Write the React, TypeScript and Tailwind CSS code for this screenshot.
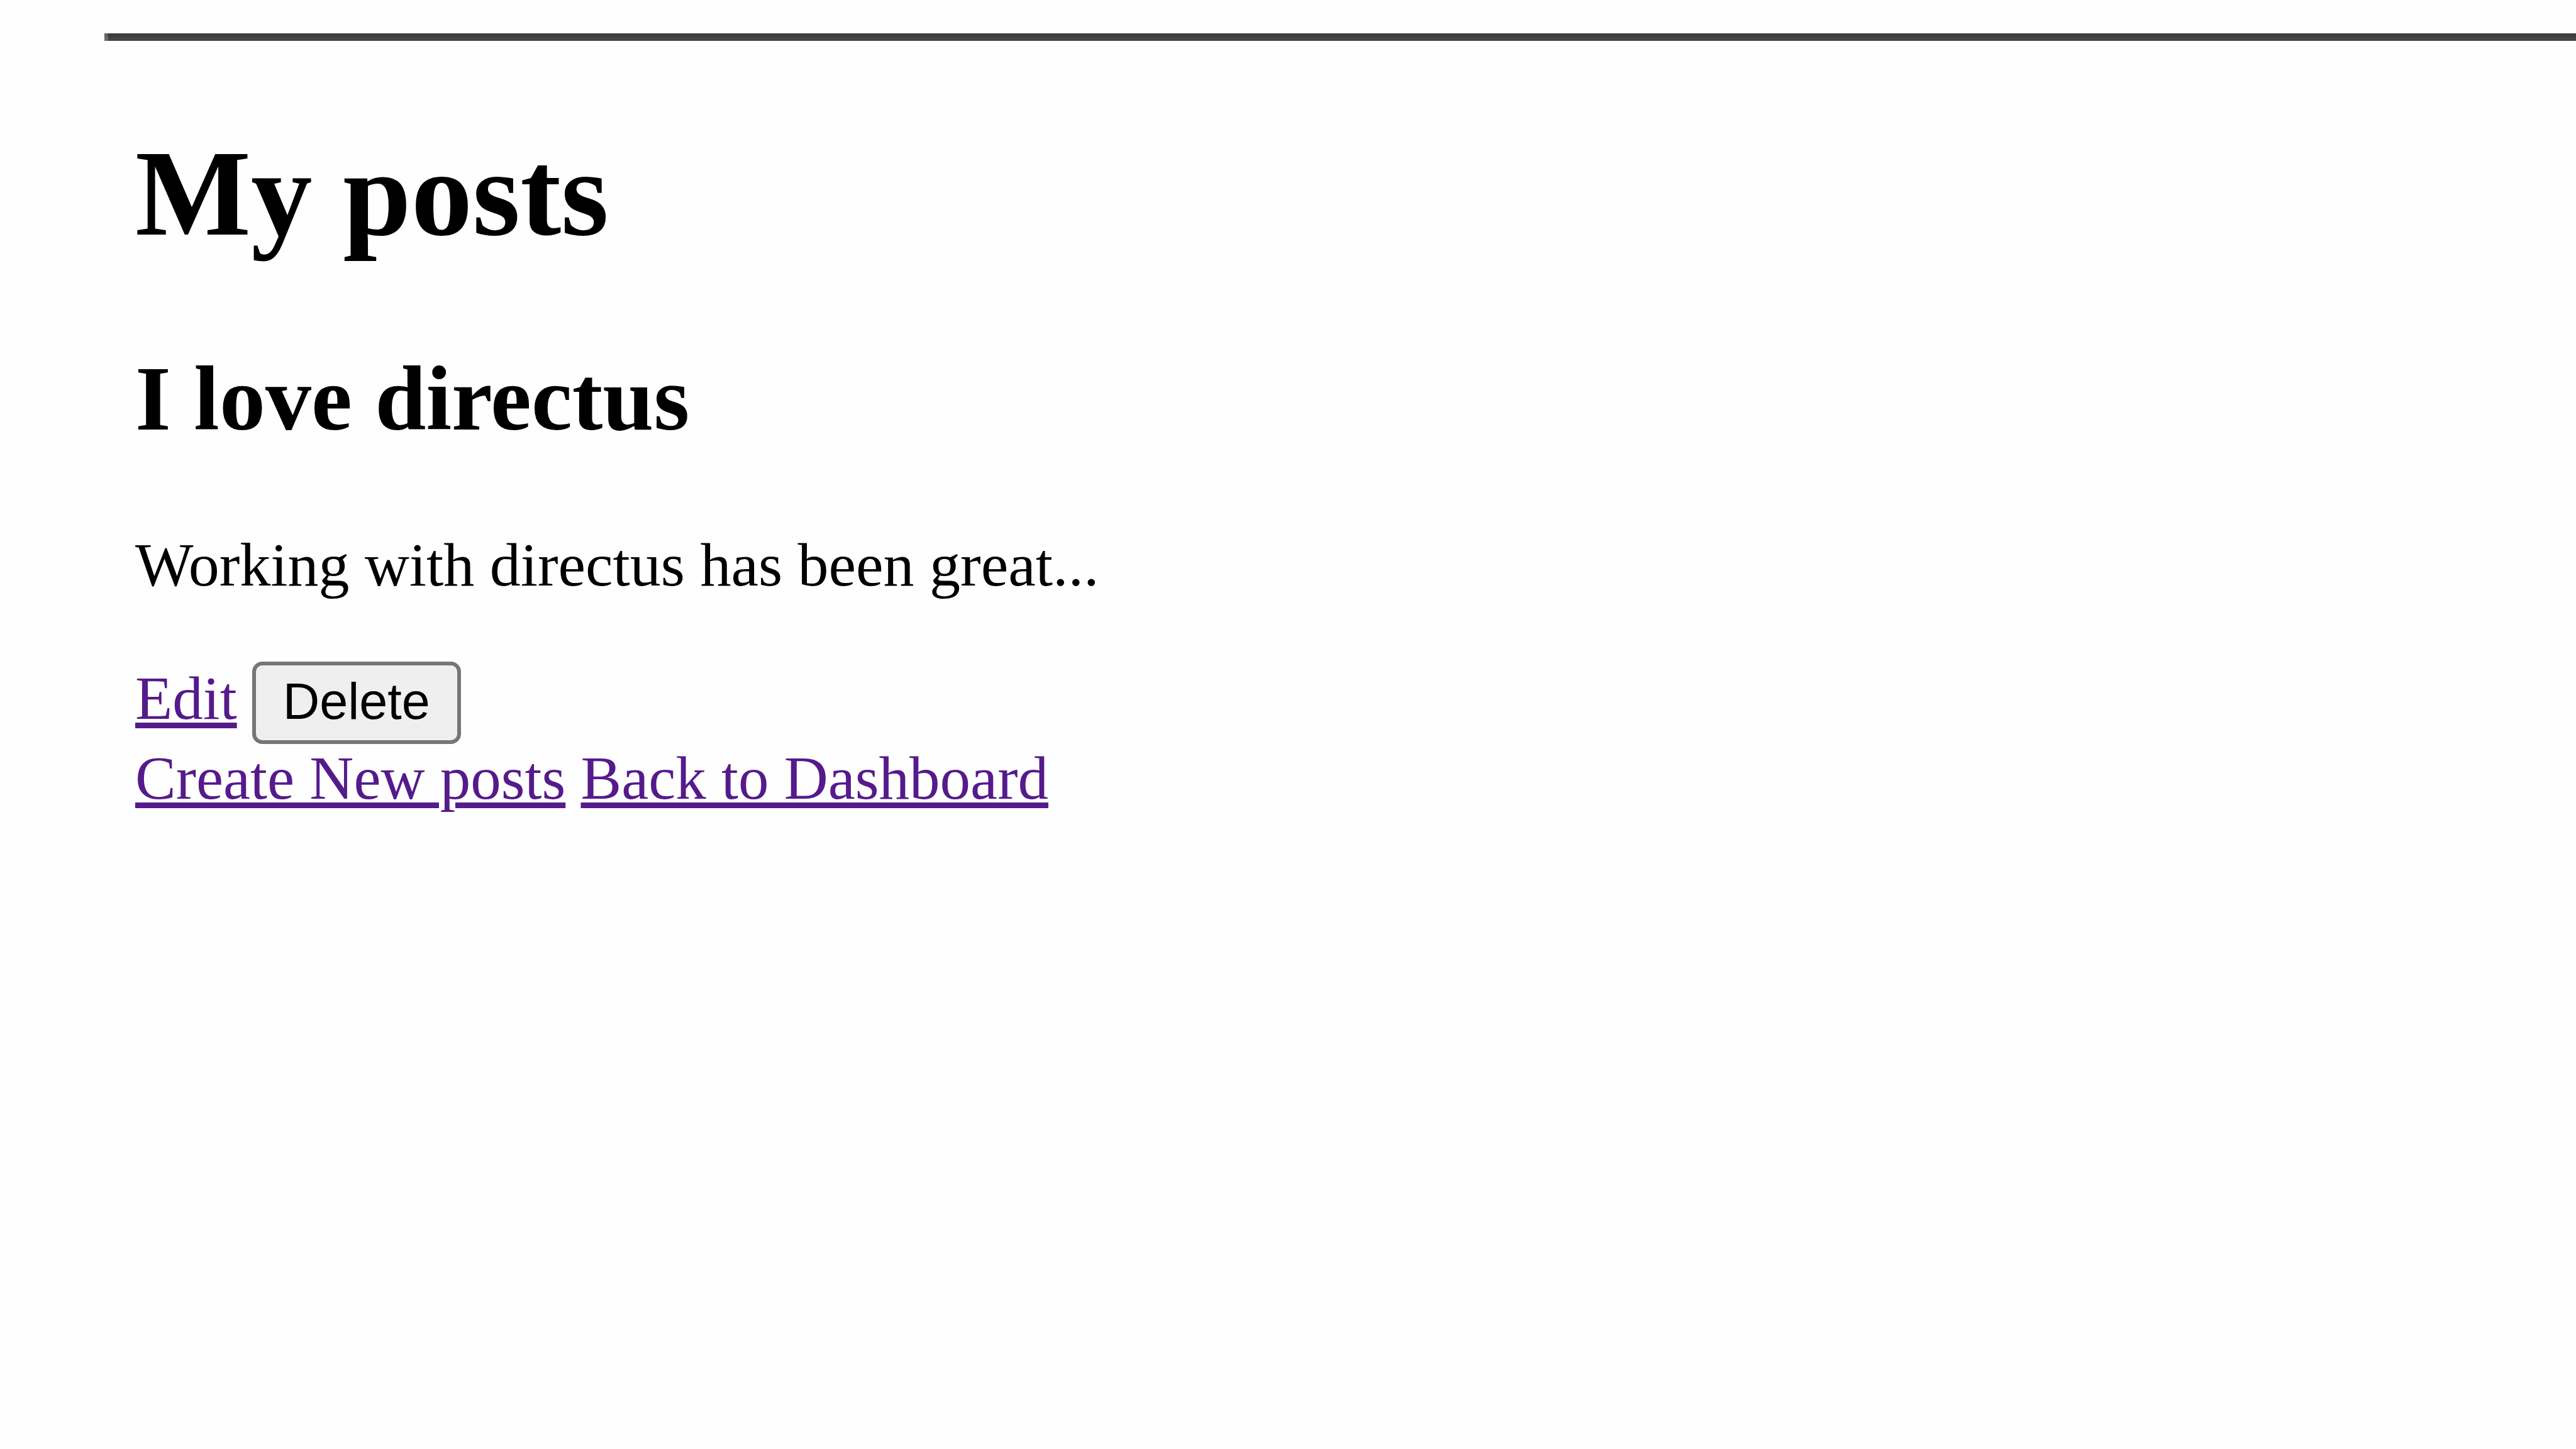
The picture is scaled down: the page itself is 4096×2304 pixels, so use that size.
const linkClass =
  'text-[#551a8b] underline decoration-[9px] underline-offset-[6px]';

function TopRule() {
  return (
    <div className="ml-[166px] mt-[53px]" role="separator">
      <div className="h-[6px] border-l-[6px] border-[#626262] bg-[#3c3c3c]" />
      <div className="h-[6px] border-l-[6px] border-[#6b6d6c] bg-[#454746]" />
    </div>
  );
}

export default function App() {
  return (
    <div className="flex min-h-screen flex-col bg-[#fefefe] font-['Liberation_Serif','Times_New_Roman',serif] text-[97px] leading-[104px] text-black">
      <TopRule />
      <main className="pl-[215px]">
        <h1 className="mt-[134px] text-[195px] font-bold leading-[216px]">My posts</h1>
        <article>
          <h2 className="mt-[138px] text-[146px] font-bold leading-[162px]">I love directus</h2>
          <p className="mt-[131px] text-[98px]">Working with directus has been great...</p>
          <div className="mt-[102px] flex items-baseline gap-6">
            <a href="#edit" className={linkClass}>
              Edit
            </a>
            <button
              type="button"
              className="rounded-[16px] border-[6px] border-[#767676] bg-[#efefef] px-[43px] pb-[16px] pt-[11px] font-['Liberation_Sans',Arial,sans-serif] text-[81px] leading-[92px] text-black"
            >
              Delete
            </button>
          </div>
        </article>
        <nav className="mt-[3px]">
          <a href="#create" className={linkClass}>
            Create New posts
          </a>{' '}
          <a href="#dashboard" className={linkClass}>
            Back to Dashboard
          </a>
        </nav>
      </main>
    </div>
  );
}
